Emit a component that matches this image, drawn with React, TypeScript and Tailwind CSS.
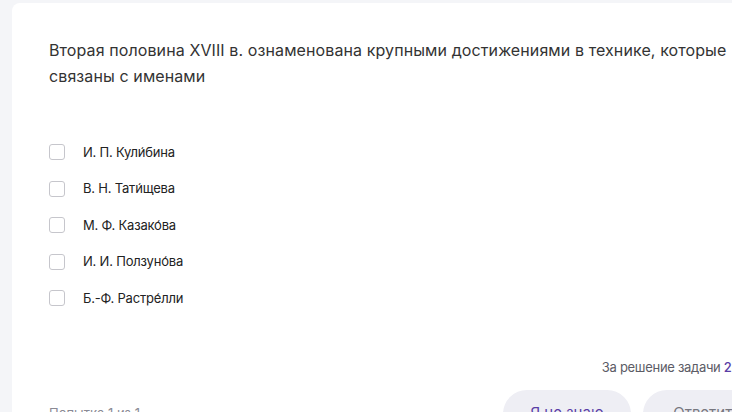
import React from "react";

const options = [
  "И. П. Кули\u0301бина",
  "В. Н. Тати\u0301щева",
  "М. Ф. Казако\u0301ва",
  "И. И. Ползуно\u0301ва",
  "Б.-Ф. Растре\u0301лли",
];

export default function App() {
  return (
    <div
      className="w-[732px] h-[412px] overflow-hidden bg-[#f4f5f8] pl-3 pt-[3px]"
      style={{ fontFamily: "Inter, 'Noto Sans', sans-serif" }}
    >
      <div className="w-[796px] h-[500px] bg-white rounded-tl-[8px] px-[37px] pt-[34px]">
        <p className="text-[16px] leading-[26px] text-[#333333] tracking-[0.1px]">
          Вторая половина XVIII в. ознаменована крупными достижениями в технике, которые связаны с именами
        </p>
        <div className="mt-[45px] flex flex-col">
          {options.map((o) => (
            <label key={o} className="h-[36.5px] flex items-center gap-[18px] cursor-pointer">
              <span className="w-4 h-4 rounded-[3px] border border-[#c6c6cc] bg-white shrink-0" />
              <span className="text-[13px] text-[#222222] tracking-[-0.2px]">{o}</span>
            </label>
          ))}
        </div>
        <div className="mt-10 flex justify-end text-[13px] leading-5 text-[#5c5c66]">
          <span className="tracking-[-0.3px]">
            За решение задачи <span className="text-[#5a3ea6] font-medium">2 балла</span>
          </span>
        </div>
        <div className="mt-[13px] flex items-center justify-between">
          <span className="text-[13px] text-[#8a8a94]">Попытка 1 из 1</span>
          <div className="flex gap-3">
            <button className="h-12 w-[128px] rounded-full bg-[#eeeef4] text-[15px] text-[#5a3ea6]">
              Я не знаю
            </button>
            <button className="h-12 w-[128px] rounded-full bg-[#eeeef4] text-[15px] text-[#77777f]">
              Ответить
            </button>
          </div>
        </div>
      </div>
    </div>
  );
}
